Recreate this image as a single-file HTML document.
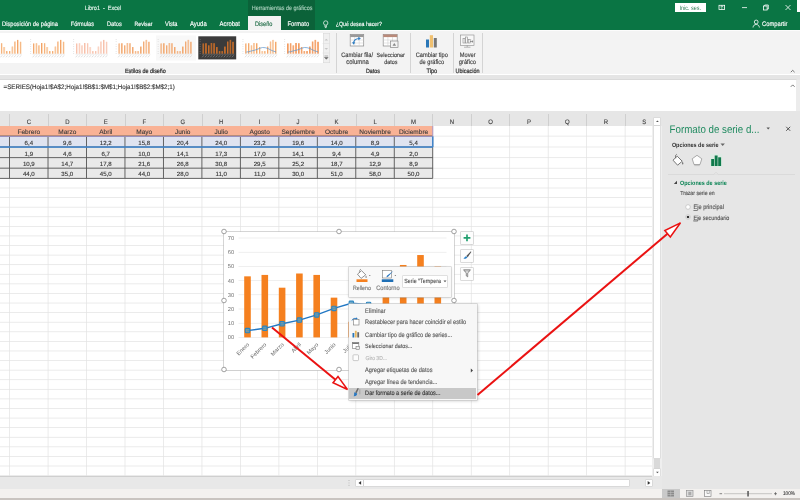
<!DOCTYPE html><html><head><meta charset="utf-8"><title>Excel</title><style>html,body{margin:0;padding:0;}body{width:800px;height:500px;overflow:hidden;position:relative;background:#fff;font-family:"Liberation Sans",sans-serif;}#r{position:absolute;left:0;top:0;width:800px;height:500px;overflow:hidden;}#r{will-change:transform;}#r div,#r span,#r svg{position:absolute;}#r svg.t{left:0;top:0;}#r text{white-space:pre;}#r{text-rendering:geometricPrecision;}#r svg{overflow:visible;}</style></head><body><div id="r">
<div style="left:0.00px;top:0.00px;width:800.00px;height:30.40px;background:#0a7544;"></div>
<div style="left:247.50px;top:0.00px;width:67.50px;height:30.40px;background:#0b6239;"></div>
<div style="left:797.00px;top:0.00px;width:3.00px;height:12.00px;background:#fff;"></div>
<svg class="t" width="1" height="1"><text transform="translate(84.75 10.00) scale(1 1.14)" font-size="5.47" fill="#e8f6ee" stroke="#e8f6ee" stroke-width="0.12">Libro1  -  Excel</text></svg>
<svg class="t" width="1" height="1"><text transform="translate(251.75 10.00) scale(1 1.14)" font-size="5.44" fill="#a8cfbb" stroke="#a8cfbb" stroke-width="0.12">Herramientas de gráficos</text></svg>
<svg class="t" width="1" height="1"><text transform="translate(2.00 26.00) scale(1 1.14)" font-size="5.72" fill="#fff" stroke="#fff" stroke-width="0.12">Disposición de página</text></svg>
<svg class="t" width="1" height="1"><text transform="translate(70.75 26.00) scale(1 1.14)" font-size="5.58" fill="#fff" stroke="#fff" stroke-width="0.12">Fórmulas</text></svg>
<svg class="t" width="1" height="1"><text transform="translate(107.00 26.00) scale(1 1.14)" font-size="5.65" fill="#fff" stroke="#fff" stroke-width="0.12">Datos</text></svg>
<svg class="t" width="1" height="1"><text transform="translate(134.50 26.00) scale(1 1.14)" font-size="5.31" fill="#fff" stroke="#fff" stroke-width="0.12">Revisar</text></svg>
<svg class="t" width="1" height="1"><text transform="translate(165.00 26.00) scale(1 1.14)" font-size="5.67" fill="#fff" stroke="#fff" stroke-width="0.12">Vista</text></svg>
<svg class="t" width="1" height="1"><text transform="translate(190.00 26.00) scale(1 1.14)" font-size="5.95" fill="#fff" stroke="#fff" stroke-width="0.12">Ayuda</text></svg>
<svg class="t" width="1" height="1"><text transform="translate(219.50 26.00) scale(1 1.14)" font-size="5.95" fill="#fff" stroke="#fff" stroke-width="0.12">Acrobat</text></svg>
<div style="left:248.00px;top:16.25px;width:32.50px;height:14.60px;background:#f3f3f3;"></div>
<svg class="t" width="1" height="1"><text transform="translate(255.00 26.00) scale(1 1.14)" font-size="5.62" fill="#1e6b45" stroke="#1e6b45" stroke-width="0.12">Diseño</text></svg>
<svg class="t" width="1" height="1"><text transform="translate(287.50 26.00) scale(1 1.14)" font-size="5.84" fill="#fff" stroke="#fff" stroke-width="0.12">Formato</text></svg>
<svg class="t" width="1" height="1"><text transform="translate(335.75 26.00) scale(1 1.14)" font-size="5.23" fill="#fff" stroke="#fff" stroke-width="0.12">¿Qué desea hacer?</text></svg>
<svg style="left:322px;top:19.500px" width="8" height="9" viewBox="0 0 8 9"><circle cx="3.700" cy="3" r="2.200" fill="none" stroke="#fff" stroke-width="0.700"/><path d="M2.900 5.300v1.500h1.600v-1.500M2.900 7.600h1.600" stroke="#fff" stroke-width="0.700" fill="none"/></svg>
<div style="left:674.50px;top:3.00px;width:31.75px;height:8.75px;background:#fff;"></div>
<svg class="t" width="1" height="1"><text transform="translate(679.50 9.60) scale(1 1.14)" font-size="5.45" fill="#2f7d55">Inic. ses.</text></svg>
<svg style="left:715px;top:2px" width="85" height="12" viewBox="0 0 85 12" fill="none" stroke="#fff" stroke-width="0.8"><rect x="4" y="3.3" width="5.6" height="4.2"/><path d="M6.8 3.3v4.2M5.3 5l1.5-1 1.5 1" stroke-width="0.6"/><path d="M27 5.6h5"/><rect x="48.5" y="4" width="3.6" height="4"/><path d="M49.7 4v-1h3.6v4h-1.2"/><path d="M70.5 3l5 5M75.500 3l-5 5"/></svg>
<svg style="left:751px;top:18.500px" width="10" height="10" viewBox="0 0 10 10" fill="none" stroke="#fff" stroke-width="0.8"><circle cx="5.200" cy="3" r="1.900"/><path d="M2 8.500c0.300-2.200 1.500-3 3.200-3s2.900 0.800 3.200 3"/></svg>
<svg class="t" width="1" height="1"><text transform="translate(762.00 26.00) scale(1 1.14)" font-size="5.81" fill="#fff" stroke="#fff" stroke-width="0.12">Compartir</text></svg>
<div style="left:0.00px;top:30.40px;width:800.00px;height:1.00px;background:#fcfcfc;"></div>
<div style="left:0.00px;top:31.40px;width:800.00px;height:43.00px;background:#f3f3f3;"></div>
<div style="left:0.00px;top:74.70px;width:800.00px;height:5.80px;background:#e5e5e5;"></div>
<div style="left:0.00px;top:33.00px;width:322.50px;height:29.50px;background:#fff;"></div>
<div style="left:322.50px;top:33.00px;width:7.50px;height:29.50px;background:#f0f0f0;box-shadow:inset 0 0 0 0.5px #d5d5d5;"></div>
<svg style="left:0;top:0" width="331" height="70" viewBox="0 0 331 70"><rect x="-9.88" y="43.47" width="0.73" height="10.23" fill="#ef8030"/><rect x="-9.15" y="43.47" width="0.73" height="10.23" fill="#f9cfa0"/><rect x="-7.17" y="43.23" width="0.73" height="10.47" fill="#ef8030"/><rect x="-6.44" y="43.23" width="0.73" height="10.47" fill="#f9cfa0"/><rect x="-4.46" y="45.37" width="0.73" height="8.33" fill="#ef8030"/><rect x="-3.73" y="45.37" width="0.73" height="8.33" fill="#f9cfa0"/><rect x="-1.75" y="42.99" width="0.73" height="10.71" fill="#ef8030"/><rect x="-1.02" y="42.99" width="0.73" height="10.71" fill="#f9cfa0"/><rect x="0.96" y="43.23" width="0.73" height="10.47" fill="#ef8030"/><rect x="1.69" y="43.23" width="0.73" height="10.47" fill="#f9cfa0"/><rect x="3.66" y="47.04" width="0.73" height="6.66" fill="#ef8030"/><rect x="4.40" y="47.04" width="0.73" height="6.66" fill="#f9cfa0"/><rect x="6.37" y="51.08" width="0.73" height="2.62" fill="#ef8030"/><rect x="7.10" y="51.08" width="0.73" height="2.62" fill="#f9cfa0"/><rect x="9.08" y="51.08" width="0.73" height="2.62" fill="#ef8030"/><rect x="9.81" y="51.08" width="0.73" height="2.62" fill="#f9cfa0"/><rect x="11.79" y="46.56" width="0.73" height="7.14" fill="#ef8030"/><rect x="12.52" y="46.56" width="0.73" height="7.14" fill="#f9cfa0"/><rect x="14.50" y="41.56" width="0.73" height="12.14" fill="#ef8030"/><rect x="15.23" y="41.56" width="0.73" height="12.14" fill="#f9cfa0"/><rect x="17.21" y="39.90" width="0.73" height="13.80" fill="#ef8030"/><rect x="17.94" y="39.90" width="0.73" height="13.80" fill="#f9cfa0"/><rect x="19.91" y="41.80" width="0.73" height="11.90" fill="#ef8030"/><rect x="20.65" y="41.80" width="0.73" height="11.90" fill="#f9cfa0"/><rect x="-10.5" y="53.900000000000006" width="32.5" height="0.400" fill="#d8d8d8"/><path d="M-10.35 57.300000000000004 l1.700 -2" stroke="#bdbdbd" stroke-width="0.500"/><path d="M-7.64 57.300000000000004 l1.700 -2" stroke="#bdbdbd" stroke-width="0.500"/><path d="M-4.93 57.300000000000004 l1.700 -2" stroke="#bdbdbd" stroke-width="0.500"/><path d="M-2.22 57.300000000000004 l1.700 -2" stroke="#bdbdbd" stroke-width="0.500"/><path d="M0.49 57.300000000000004 l1.700 -2" stroke="#bdbdbd" stroke-width="0.500"/><path d="M3.20 57.300000000000004 l1.700 -2" stroke="#bdbdbd" stroke-width="0.500"/><path d="M5.90 57.300000000000004 l1.700 -2" stroke="#bdbdbd" stroke-width="0.500"/><path d="M8.61 57.300000000000004 l1.700 -2" stroke="#bdbdbd" stroke-width="0.500"/><path d="M11.32 57.300000000000004 l1.700 -2" stroke="#bdbdbd" stroke-width="0.500"/><path d="M14.03 57.300000000000004 l1.700 -2" stroke="#bdbdbd" stroke-width="0.500"/><path d="M16.74 57.300000000000004 l1.700 -2" stroke="#bdbdbd" stroke-width="0.500"/><path d="M19.45 57.300000000000004 l1.700 -2" stroke="#bdbdbd" stroke-width="0.500"/><rect x="-12.80" y="53.45" width="0.900" height="0.500" fill="#c4c4c4"/><rect x="-12.80" y="51.07" width="0.900" height="0.500" fill="#c4c4c4"/><rect x="-12.80" y="48.69" width="0.900" height="0.500" fill="#c4c4c4"/><rect x="-12.80" y="46.31" width="0.900" height="0.500" fill="#c4c4c4"/><rect x="-12.80" y="43.93" width="0.900" height="0.500" fill="#c4c4c4"/><rect x="-12.80" y="41.55" width="0.900" height="0.500" fill="#c4c4c4"/><rect x="-12.80" y="39.17" width="0.900" height="0.500" fill="#c4c4c4"/><rect x="33.12" y="43.47" width="0.73" height="10.23" fill="#ef8030"/><rect x="33.85" y="43.47" width="0.73" height="10.23" fill="#f9cfa0"/><rect x="35.83" y="43.23" width="0.73" height="10.47" fill="#ef8030"/><rect x="36.56" y="43.23" width="0.73" height="10.47" fill="#f9cfa0"/><rect x="38.54" y="45.37" width="0.73" height="8.33" fill="#ef8030"/><rect x="39.27" y="45.37" width="0.73" height="8.33" fill="#f9cfa0"/><rect x="41.25" y="42.99" width="0.73" height="10.71" fill="#ef8030"/><rect x="41.98" y="42.99" width="0.73" height="10.71" fill="#f9cfa0"/><rect x="43.96" y="43.23" width="0.73" height="10.47" fill="#ef8030"/><rect x="44.69" y="43.23" width="0.73" height="10.47" fill="#f9cfa0"/><rect x="46.66" y="47.04" width="0.73" height="6.66" fill="#ef8030"/><rect x="47.40" y="47.04" width="0.73" height="6.66" fill="#f9cfa0"/><rect x="49.37" y="51.08" width="0.73" height="2.62" fill="#ef8030"/><rect x="50.10" y="51.08" width="0.73" height="2.62" fill="#f9cfa0"/><rect x="52.08" y="51.08" width="0.73" height="2.62" fill="#ef8030"/><rect x="52.81" y="51.08" width="0.73" height="2.62" fill="#f9cfa0"/><rect x="54.79" y="46.56" width="0.73" height="7.14" fill="#ef8030"/><rect x="55.52" y="46.56" width="0.73" height="7.14" fill="#f9cfa0"/><rect x="57.50" y="41.56" width="0.73" height="12.14" fill="#ef8030"/><rect x="58.23" y="41.56" width="0.73" height="12.14" fill="#f9cfa0"/><rect x="60.21" y="39.90" width="0.73" height="13.80" fill="#ef8030"/><rect x="60.94" y="39.90" width="0.73" height="13.80" fill="#f9cfa0"/><rect x="62.91" y="41.80" width="0.73" height="11.90" fill="#ef8030"/><rect x="63.65" y="41.80" width="0.73" height="11.90" fill="#f9cfa0"/><rect x="32.5" y="53.900000000000006" width="32.5" height="0.400" fill="#d8d8d8"/><path d="M32.65 57.300000000000004 l1.700 -2" stroke="#bdbdbd" stroke-width="0.500"/><path d="M35.36 57.300000000000004 l1.700 -2" stroke="#bdbdbd" stroke-width="0.500"/><path d="M38.07 57.300000000000004 l1.700 -2" stroke="#bdbdbd" stroke-width="0.500"/><path d="M40.78 57.300000000000004 l1.700 -2" stroke="#bdbdbd" stroke-width="0.500"/><path d="M43.49 57.300000000000004 l1.700 -2" stroke="#bdbdbd" stroke-width="0.500"/><path d="M46.20 57.300000000000004 l1.700 -2" stroke="#bdbdbd" stroke-width="0.500"/><path d="M48.90 57.300000000000004 l1.700 -2" stroke="#bdbdbd" stroke-width="0.500"/><path d="M51.61 57.300000000000004 l1.700 -2" stroke="#bdbdbd" stroke-width="0.500"/><path d="M54.32 57.300000000000004 l1.700 -2" stroke="#bdbdbd" stroke-width="0.500"/><path d="M57.03 57.300000000000004 l1.700 -2" stroke="#bdbdbd" stroke-width="0.500"/><path d="M59.74 57.300000000000004 l1.700 -2" stroke="#bdbdbd" stroke-width="0.500"/><path d="M62.45 57.300000000000004 l1.700 -2" stroke="#bdbdbd" stroke-width="0.500"/><rect x="30.20" y="53.45" width="0.900" height="0.500" fill="#c4c4c4"/><rect x="30.20" y="51.07" width="0.900" height="0.500" fill="#c4c4c4"/><rect x="30.20" y="48.69" width="0.900" height="0.500" fill="#c4c4c4"/><rect x="30.20" y="46.31" width="0.900" height="0.500" fill="#c4c4c4"/><rect x="30.20" y="43.93" width="0.900" height="0.500" fill="#c4c4c4"/><rect x="30.20" y="41.55" width="0.900" height="0.500" fill="#c4c4c4"/><rect x="30.20" y="39.17" width="0.900" height="0.500" fill="#c4c4c4"/><rect x="76.12" y="43.47" width="0.73" height="10.23" fill="#f5a98c"/><rect x="76.85" y="43.47" width="0.73" height="10.23" fill="#fad5c4"/><rect x="78.83" y="43.23" width="0.73" height="10.47" fill="#f5a98c"/><rect x="79.56" y="43.23" width="0.73" height="10.47" fill="#fad5c4"/><rect x="81.54" y="45.37" width="0.73" height="8.33" fill="#f5a98c"/><rect x="82.27" y="45.37" width="0.73" height="8.33" fill="#fad5c4"/><rect x="84.25" y="42.99" width="0.73" height="10.71" fill="#f5a98c"/><rect x="84.98" y="42.99" width="0.73" height="10.71" fill="#fad5c4"/><rect x="86.96" y="43.23" width="0.73" height="10.47" fill="#f5a98c"/><rect x="87.69" y="43.23" width="0.73" height="10.47" fill="#fad5c4"/><rect x="89.66" y="47.04" width="0.73" height="6.66" fill="#f5a98c"/><rect x="90.40" y="47.04" width="0.73" height="6.66" fill="#fad5c4"/><rect x="92.37" y="51.08" width="0.73" height="2.62" fill="#f5a98c"/><rect x="93.10" y="51.08" width="0.73" height="2.62" fill="#fad5c4"/><rect x="95.08" y="51.08" width="0.73" height="2.62" fill="#f5a98c"/><rect x="95.81" y="51.08" width="0.73" height="2.62" fill="#fad5c4"/><rect x="97.79" y="46.56" width="0.73" height="7.14" fill="#f5a98c"/><rect x="98.52" y="46.56" width="0.73" height="7.14" fill="#fad5c4"/><rect x="100.50" y="41.56" width="0.73" height="12.14" fill="#f5a98c"/><rect x="101.23" y="41.56" width="0.73" height="12.14" fill="#fad5c4"/><rect x="103.21" y="39.90" width="0.73" height="13.80" fill="#f5a98c"/><rect x="103.94" y="39.90" width="0.73" height="13.80" fill="#fad5c4"/><rect x="105.91" y="41.80" width="0.73" height="11.90" fill="#f5a98c"/><rect x="106.65" y="41.80" width="0.73" height="11.90" fill="#fad5c4"/><rect x="75.5" y="53.900000000000006" width="32.5" height="0.400" fill="#d8d8d8"/><path d="M75.65 57.300000000000004 l1.700 -2" stroke="#bdbdbd" stroke-width="0.500"/><path d="M78.36 57.300000000000004 l1.700 -2" stroke="#bdbdbd" stroke-width="0.500"/><path d="M81.07 57.300000000000004 l1.700 -2" stroke="#bdbdbd" stroke-width="0.500"/><path d="M83.78 57.300000000000004 l1.700 -2" stroke="#bdbdbd" stroke-width="0.500"/><path d="M86.49 57.300000000000004 l1.700 -2" stroke="#bdbdbd" stroke-width="0.500"/><path d="M89.20 57.300000000000004 l1.700 -2" stroke="#bdbdbd" stroke-width="0.500"/><path d="M91.90 57.300000000000004 l1.700 -2" stroke="#bdbdbd" stroke-width="0.500"/><path d="M94.61 57.300000000000004 l1.700 -2" stroke="#bdbdbd" stroke-width="0.500"/><path d="M97.32 57.300000000000004 l1.700 -2" stroke="#bdbdbd" stroke-width="0.500"/><path d="M100.03 57.300000000000004 l1.700 -2" stroke="#bdbdbd" stroke-width="0.500"/><path d="M102.74 57.300000000000004 l1.700 -2" stroke="#bdbdbd" stroke-width="0.500"/><path d="M105.45 57.300000000000004 l1.700 -2" stroke="#bdbdbd" stroke-width="0.500"/><rect x="73.20" y="53.45" width="0.900" height="0.500" fill="#c4c4c4"/><rect x="73.20" y="51.07" width="0.900" height="0.500" fill="#c4c4c4"/><rect x="73.20" y="48.69" width="0.900" height="0.500" fill="#c4c4c4"/><rect x="73.20" y="46.31" width="0.900" height="0.500" fill="#c4c4c4"/><rect x="73.20" y="43.93" width="0.900" height="0.500" fill="#c4c4c4"/><rect x="73.20" y="41.55" width="0.900" height="0.500" fill="#c4c4c4"/><rect x="73.20" y="39.17" width="0.900" height="0.500" fill="#c4c4c4"/><rect x="118.62" y="43.47" width="0.73" height="10.23" fill="#ee8a3e"/><rect x="119.35" y="43.47" width="0.73" height="10.23" fill="#f5b98a"/><rect x="121.33" y="43.23" width="0.73" height="10.47" fill="#ee8a3e"/><rect x="122.06" y="43.23" width="0.73" height="10.47" fill="#f5b98a"/><rect x="124.04" y="45.37" width="0.73" height="8.33" fill="#ee8a3e"/><rect x="124.77" y="45.37" width="0.73" height="8.33" fill="#f5b98a"/><rect x="126.75" y="42.99" width="0.73" height="10.71" fill="#ee8a3e"/><rect x="127.48" y="42.99" width="0.73" height="10.71" fill="#f5b98a"/><rect x="129.46" y="43.23" width="0.73" height="10.47" fill="#ee8a3e"/><rect x="130.19" y="43.23" width="0.73" height="10.47" fill="#f5b98a"/><rect x="132.16" y="47.04" width="0.73" height="6.66" fill="#ee8a3e"/><rect x="132.90" y="47.04" width="0.73" height="6.66" fill="#f5b98a"/><rect x="134.87" y="51.08" width="0.73" height="2.62" fill="#ee8a3e"/><rect x="135.60" y="51.08" width="0.73" height="2.62" fill="#f5b98a"/><rect x="137.58" y="51.08" width="0.73" height="2.62" fill="#ee8a3e"/><rect x="138.31" y="51.08" width="0.73" height="2.62" fill="#f5b98a"/><rect x="140.29" y="46.56" width="0.73" height="7.14" fill="#ee8a3e"/><rect x="141.02" y="46.56" width="0.73" height="7.14" fill="#f5b98a"/><rect x="143.00" y="41.56" width="0.73" height="12.14" fill="#ee8a3e"/><rect x="143.73" y="41.56" width="0.73" height="12.14" fill="#f5b98a"/><rect x="145.71" y="39.90" width="0.73" height="13.80" fill="#ee8a3e"/><rect x="146.44" y="39.90" width="0.73" height="13.80" fill="#f5b98a"/><rect x="148.41" y="41.80" width="0.73" height="11.90" fill="#ee8a3e"/><rect x="149.15" y="41.80" width="0.73" height="11.90" fill="#f5b98a"/><rect x="118" y="53.900000000000006" width="32.5" height="0.400" fill="#d8d8d8"/><path d="M118.15 57.300000000000004 l1.700 -2" stroke="#bdbdbd" stroke-width="0.500"/><path d="M120.86 57.300000000000004 l1.700 -2" stroke="#bdbdbd" stroke-width="0.500"/><path d="M123.57 57.300000000000004 l1.700 -2" stroke="#bdbdbd" stroke-width="0.500"/><path d="M126.28 57.300000000000004 l1.700 -2" stroke="#bdbdbd" stroke-width="0.500"/><path d="M128.99 57.300000000000004 l1.700 -2" stroke="#bdbdbd" stroke-width="0.500"/><path d="M131.70 57.300000000000004 l1.700 -2" stroke="#bdbdbd" stroke-width="0.500"/><path d="M134.40 57.300000000000004 l1.700 -2" stroke="#bdbdbd" stroke-width="0.500"/><path d="M137.11 57.300000000000004 l1.700 -2" stroke="#bdbdbd" stroke-width="0.500"/><path d="M139.82 57.300000000000004 l1.700 -2" stroke="#bdbdbd" stroke-width="0.500"/><path d="M142.53 57.300000000000004 l1.700 -2" stroke="#bdbdbd" stroke-width="0.500"/><path d="M145.24 57.300000000000004 l1.700 -2" stroke="#bdbdbd" stroke-width="0.500"/><path d="M147.95 57.300000000000004 l1.700 -2" stroke="#bdbdbd" stroke-width="0.500"/><rect x="115.70" y="53.45" width="0.900" height="0.500" fill="#c4c4c4"/><rect x="115.70" y="51.07" width="0.900" height="0.500" fill="#c4c4c4"/><rect x="115.70" y="48.69" width="0.900" height="0.500" fill="#c4c4c4"/><rect x="115.70" y="46.31" width="0.900" height="0.500" fill="#c4c4c4"/><rect x="115.70" y="43.93" width="0.900" height="0.500" fill="#c4c4c4"/><rect x="115.70" y="41.55" width="0.900" height="0.500" fill="#c4c4c4"/><rect x="115.70" y="39.17" width="0.900" height="0.500" fill="#c4c4c4"/><rect x="156" y="35.500" width="40" height="25" fill="#f8f8f8"/><rect x="160.62" y="43.47" width="0.73" height="10.23" fill="#ee8a3e"/><rect x="161.35" y="43.47" width="0.73" height="10.23" fill="#f5b98a"/><rect x="163.33" y="43.23" width="0.73" height="10.47" fill="#ee8a3e"/><rect x="164.06" y="43.23" width="0.73" height="10.47" fill="#f5b98a"/><rect x="166.04" y="45.37" width="0.73" height="8.33" fill="#ee8a3e"/><rect x="166.77" y="45.37" width="0.73" height="8.33" fill="#f5b98a"/><rect x="168.75" y="42.99" width="0.73" height="10.71" fill="#ee8a3e"/><rect x="169.48" y="42.99" width="0.73" height="10.71" fill="#f5b98a"/><rect x="171.46" y="43.23" width="0.73" height="10.47" fill="#ee8a3e"/><rect x="172.19" y="43.23" width="0.73" height="10.47" fill="#f5b98a"/><rect x="174.16" y="47.04" width="0.73" height="6.66" fill="#ee8a3e"/><rect x="174.90" y="47.04" width="0.73" height="6.66" fill="#f5b98a"/><rect x="176.87" y="51.08" width="0.73" height="2.62" fill="#ee8a3e"/><rect x="177.60" y="51.08" width="0.73" height="2.62" fill="#f5b98a"/><rect x="179.58" y="51.08" width="0.73" height="2.62" fill="#ee8a3e"/><rect x="180.31" y="51.08" width="0.73" height="2.62" fill="#f5b98a"/><rect x="182.29" y="46.56" width="0.73" height="7.14" fill="#ee8a3e"/><rect x="183.02" y="46.56" width="0.73" height="7.14" fill="#f5b98a"/><rect x="185.00" y="41.56" width="0.73" height="12.14" fill="#ee8a3e"/><rect x="185.73" y="41.56" width="0.73" height="12.14" fill="#f5b98a"/><rect x="187.71" y="39.90" width="0.73" height="13.80" fill="#ee8a3e"/><rect x="188.44" y="39.90" width="0.73" height="13.80" fill="#f5b98a"/><rect x="190.41" y="41.80" width="0.73" height="11.90" fill="#ee8a3e"/><rect x="191.15" y="41.80" width="0.73" height="11.90" fill="#f5b98a"/><rect x="160" y="53.900000000000006" width="32.5" height="0.400" fill="#d8d8d8"/><path d="M160.15 57.300000000000004 l1.700 -2" stroke="#bdbdbd" stroke-width="0.500"/><path d="M162.86 57.300000000000004 l1.700 -2" stroke="#bdbdbd" stroke-width="0.500"/><path d="M165.57 57.300000000000004 l1.700 -2" stroke="#bdbdbd" stroke-width="0.500"/><path d="M168.28 57.300000000000004 l1.700 -2" stroke="#bdbdbd" stroke-width="0.500"/><path d="M170.99 57.300000000000004 l1.700 -2" stroke="#bdbdbd" stroke-width="0.500"/><path d="M173.70 57.300000000000004 l1.700 -2" stroke="#bdbdbd" stroke-width="0.500"/><path d="M176.40 57.300000000000004 l1.700 -2" stroke="#bdbdbd" stroke-width="0.500"/><path d="M179.11 57.300000000000004 l1.700 -2" stroke="#bdbdbd" stroke-width="0.500"/><path d="M181.82 57.300000000000004 l1.700 -2" stroke="#bdbdbd" stroke-width="0.500"/><path d="M184.53 57.300000000000004 l1.700 -2" stroke="#bdbdbd" stroke-width="0.500"/><path d="M187.24 57.300000000000004 l1.700 -2" stroke="#bdbdbd" stroke-width="0.500"/><path d="M189.95 57.300000000000004 l1.700 -2" stroke="#bdbdbd" stroke-width="0.500"/><rect x="157.70" y="53.45" width="0.900" height="0.500" fill="#c4c4c4"/><rect x="157.70" y="51.07" width="0.900" height="0.500" fill="#c4c4c4"/><rect x="157.70" y="48.69" width="0.900" height="0.500" fill="#c4c4c4"/><rect x="157.70" y="46.31" width="0.900" height="0.500" fill="#c4c4c4"/><rect x="157.70" y="43.93" width="0.900" height="0.500" fill="#c4c4c4"/><rect x="157.70" y="41.55" width="0.900" height="0.500" fill="#c4c4c4"/><rect x="157.70" y="39.17" width="0.900" height="0.500" fill="#c4c4c4"/><rect x="198.3" y="36.300" width="37.9" height="23.100" fill="#3b3b3b"/><rect x="202.62" y="43.47" width="0.73" height="10.23" fill="#f08030"/><rect x="203.35" y="43.47" width="0.73" height="10.23" fill="#d8701f"/><rect x="205.33" y="43.23" width="0.73" height="10.47" fill="#f08030"/><rect x="206.06" y="43.23" width="0.73" height="10.47" fill="#d8701f"/><rect x="208.04" y="45.37" width="0.73" height="8.33" fill="#f08030"/><rect x="208.77" y="45.37" width="0.73" height="8.33" fill="#d8701f"/><rect x="210.75" y="42.99" width="0.73" height="10.71" fill="#f08030"/><rect x="211.48" y="42.99" width="0.73" height="10.71" fill="#d8701f"/><rect x="213.46" y="43.23" width="0.73" height="10.47" fill="#f08030"/><rect x="214.19" y="43.23" width="0.73" height="10.47" fill="#d8701f"/><rect x="216.16" y="47.04" width="0.73" height="6.66" fill="#f08030"/><rect x="216.90" y="47.04" width="0.73" height="6.66" fill="#d8701f"/><rect x="218.87" y="51.08" width="0.73" height="2.62" fill="#f08030"/><rect x="219.60" y="51.08" width="0.73" height="2.62" fill="#d8701f"/><rect x="221.58" y="51.08" width="0.73" height="2.62" fill="#f08030"/><rect x="222.31" y="51.08" width="0.73" height="2.62" fill="#d8701f"/><rect x="224.29" y="46.56" width="0.73" height="7.14" fill="#f08030"/><rect x="225.02" y="46.56" width="0.73" height="7.14" fill="#d8701f"/><rect x="227.00" y="41.56" width="0.73" height="12.14" fill="#f08030"/><rect x="227.73" y="41.56" width="0.73" height="12.14" fill="#d8701f"/><rect x="229.71" y="39.90" width="0.73" height="13.80" fill="#f08030"/><rect x="230.44" y="39.90" width="0.73" height="13.80" fill="#d8701f"/><rect x="232.41" y="41.80" width="0.73" height="11.90" fill="#f08030"/><rect x="233.15" y="41.80" width="0.73" height="11.90" fill="#d8701f"/><rect x="202" y="53.900000000000006" width="32.5" height="0.400" fill="#888"/><path d="M202.15 57.300000000000004 l1.700 -2" stroke="#aaa" stroke-width="0.500"/><path d="M204.86 57.300000000000004 l1.700 -2" stroke="#aaa" stroke-width="0.500"/><path d="M207.57 57.300000000000004 l1.700 -2" stroke="#aaa" stroke-width="0.500"/><path d="M210.28 57.300000000000004 l1.700 -2" stroke="#aaa" stroke-width="0.500"/><path d="M212.99 57.300000000000004 l1.700 -2" stroke="#aaa" stroke-width="0.500"/><path d="M215.70 57.300000000000004 l1.700 -2" stroke="#aaa" stroke-width="0.500"/><path d="M218.40 57.300000000000004 l1.700 -2" stroke="#aaa" stroke-width="0.500"/><path d="M221.11 57.300000000000004 l1.700 -2" stroke="#aaa" stroke-width="0.500"/><path d="M223.82 57.300000000000004 l1.700 -2" stroke="#aaa" stroke-width="0.500"/><path d="M226.53 57.300000000000004 l1.700 -2" stroke="#aaa" stroke-width="0.500"/><path d="M229.24 57.300000000000004 l1.700 -2" stroke="#aaa" stroke-width="0.500"/><path d="M231.95 57.300000000000004 l1.700 -2" stroke="#aaa" stroke-width="0.500"/><rect x="199.70" y="53.45" width="0.900" height="0.500" fill="#999"/><rect x="199.70" y="51.07" width="0.900" height="0.500" fill="#999"/><rect x="199.70" y="48.69" width="0.900" height="0.500" fill="#999"/><rect x="199.70" y="46.31" width="0.900" height="0.500" fill="#999"/><rect x="199.70" y="43.93" width="0.900" height="0.500" fill="#999"/><rect x="199.70" y="41.55" width="0.900" height="0.500" fill="#999"/><rect x="199.70" y="39.17" width="0.900" height="0.500" fill="#999"/><rect x="245.42" y="43.47" width="0.73" height="10.23" fill="#ef8030"/><rect x="246.16" y="43.47" width="0.73" height="10.23" fill="#f9cfa0"/><rect x="248.14" y="43.23" width="0.73" height="10.47" fill="#ef8030"/><rect x="248.88" y="43.23" width="0.73" height="10.47" fill="#f9cfa0"/><rect x="250.86" y="45.37" width="0.73" height="8.33" fill="#ef8030"/><rect x="251.59" y="45.37" width="0.73" height="8.33" fill="#f9cfa0"/><rect x="253.57" y="42.99" width="0.73" height="10.71" fill="#ef8030"/><rect x="254.31" y="42.99" width="0.73" height="10.71" fill="#f9cfa0"/><rect x="256.29" y="43.23" width="0.73" height="10.47" fill="#ef8030"/><rect x="257.03" y="43.23" width="0.73" height="10.47" fill="#f9cfa0"/><rect x="259.01" y="47.04" width="0.73" height="6.66" fill="#ef8030"/><rect x="259.74" y="47.04" width="0.73" height="6.66" fill="#f9cfa0"/><rect x="261.72" y="51.08" width="0.73" height="2.62" fill="#ef8030"/><rect x="262.46" y="51.08" width="0.73" height="2.62" fill="#f9cfa0"/><rect x="264.44" y="51.08" width="0.73" height="2.62" fill="#ef8030"/><rect x="265.18" y="51.08" width="0.73" height="2.62" fill="#f9cfa0"/><rect x="267.16" y="46.56" width="0.73" height="7.14" fill="#ef8030"/><rect x="267.89" y="46.56" width="0.73" height="7.14" fill="#f9cfa0"/><rect x="269.87" y="41.56" width="0.73" height="12.14" fill="#ef8030"/><rect x="270.61" y="41.56" width="0.73" height="12.14" fill="#f9cfa0"/><rect x="272.59" y="39.90" width="0.73" height="13.80" fill="#ef8030"/><rect x="273.32" y="39.90" width="0.73" height="13.80" fill="#f9cfa0"/><rect x="275.31" y="41.80" width="0.73" height="11.90" fill="#ef8030"/><rect x="276.04" y="41.80" width="0.73" height="11.90" fill="#f9cfa0"/><polyline points="246.2,52.1 248.9,51.7 251.6,50.9 254.3,50.3 257.0,49.4 259.7,48.3 262.5,47.5 265.2,47.7 267.9,48.5 270.6,49.9 273.3,51.1 276.0,51.9" fill="none" stroke="#5b95cf" stroke-width="0.700"/><rect x="244.8" y="53.900000000000006" width="32.6" height="0.400" fill="#d8d8d8"/><path d="M244.96 57.300000000000004 l1.700 -2" stroke="#bdbdbd" stroke-width="0.500"/><path d="M247.68 57.300000000000004 l1.700 -2" stroke="#bdbdbd" stroke-width="0.500"/><path d="M250.39 57.300000000000004 l1.700 -2" stroke="#bdbdbd" stroke-width="0.500"/><path d="M253.11 57.300000000000004 l1.700 -2" stroke="#bdbdbd" stroke-width="0.500"/><path d="M255.83 57.300000000000004 l1.700 -2" stroke="#bdbdbd" stroke-width="0.500"/><path d="M258.54 57.300000000000004 l1.700 -2" stroke="#bdbdbd" stroke-width="0.500"/><path d="M261.26 57.300000000000004 l1.700 -2" stroke="#bdbdbd" stroke-width="0.500"/><path d="M263.98 57.300000000000004 l1.700 -2" stroke="#bdbdbd" stroke-width="0.500"/><path d="M266.69 57.300000000000004 l1.700 -2" stroke="#bdbdbd" stroke-width="0.500"/><path d="M269.41 57.300000000000004 l1.700 -2" stroke="#bdbdbd" stroke-width="0.500"/><path d="M272.12 57.300000000000004 l1.700 -2" stroke="#bdbdbd" stroke-width="0.500"/><path d="M274.84 57.300000000000004 l1.700 -2" stroke="#bdbdbd" stroke-width="0.500"/><rect x="242.50" y="53.45" width="0.900" height="0.500" fill="#c4c4c4"/><rect x="242.50" y="51.07" width="0.900" height="0.500" fill="#c4c4c4"/><rect x="242.50" y="48.69" width="0.900" height="0.500" fill="#c4c4c4"/><rect x="242.50" y="46.31" width="0.900" height="0.500" fill="#c4c4c4"/><rect x="242.50" y="43.93" width="0.900" height="0.500" fill="#c4c4c4"/><rect x="242.50" y="41.55" width="0.900" height="0.500" fill="#c4c4c4"/><rect x="242.50" y="39.17" width="0.900" height="0.500" fill="#c4c4c4"/><rect x="287.13" y="43.47" width="0.74" height="10.23" fill="#ee7a30"/><rect x="287.88" y="43.47" width="0.74" height="10.23" fill="#f3924a"/><rect x="289.88" y="43.23" width="0.74" height="10.47" fill="#ee7a30"/><rect x="290.62" y="43.23" width="0.74" height="10.47" fill="#f3924a"/><rect x="292.63" y="45.37" width="0.74" height="8.33" fill="#ee7a30"/><rect x="293.38" y="45.37" width="0.74" height="8.33" fill="#f3924a"/><rect x="295.38" y="42.99" width="0.74" height="10.71" fill="#ee7a30"/><rect x="296.12" y="42.99" width="0.74" height="10.71" fill="#f3924a"/><rect x="298.13" y="43.23" width="0.74" height="10.47" fill="#ee7a30"/><rect x="298.88" y="43.23" width="0.74" height="10.47" fill="#f3924a"/><rect x="300.88" y="47.04" width="0.74" height="6.66" fill="#ee7a30"/><rect x="301.62" y="47.04" width="0.74" height="6.66" fill="#f3924a"/><rect x="303.63" y="51.08" width="0.74" height="2.62" fill="#ee7a30"/><rect x="304.38" y="51.08" width="0.74" height="2.62" fill="#f3924a"/><rect x="306.38" y="51.08" width="0.74" height="2.62" fill="#ee7a30"/><rect x="307.12" y="51.08" width="0.74" height="2.62" fill="#f3924a"/><rect x="309.13" y="46.56" width="0.74" height="7.14" fill="#ee7a30"/><rect x="309.88" y="46.56" width="0.74" height="7.14" fill="#f3924a"/><rect x="311.88" y="41.56" width="0.74" height="12.14" fill="#ee7a30"/><rect x="312.62" y="41.56" width="0.74" height="12.14" fill="#f3924a"/><rect x="314.63" y="39.90" width="0.74" height="13.80" fill="#ee7a30"/><rect x="315.38" y="39.90" width="0.74" height="13.80" fill="#f3924a"/><rect x="317.38" y="41.80" width="0.74" height="11.90" fill="#ee7a30"/><rect x="318.12" y="41.80" width="0.74" height="11.90" fill="#f3924a"/><polyline points="287.9,52.1 290.6,51.7 293.4,50.9 296.1,50.3 298.9,49.4 301.6,48.3 304.4,47.5 307.1,47.7 309.9,48.5 312.6,49.9 315.4,51.1 318.1,51.9" fill="none" stroke="#5b95cf" stroke-width="0.700"/><rect x="286.5" y="53.900000000000006" width="33" height="0.400" fill="#d8d8d8"/><path d="M286.68 57.300000000000004 l1.700 -2" stroke="#bdbdbd" stroke-width="0.500"/><path d="M289.43 57.300000000000004 l1.700 -2" stroke="#bdbdbd" stroke-width="0.500"/><path d="M292.18 57.300000000000004 l1.700 -2" stroke="#bdbdbd" stroke-width="0.500"/><path d="M294.93 57.300000000000004 l1.700 -2" stroke="#bdbdbd" stroke-width="0.500"/><path d="M297.68 57.300000000000004 l1.700 -2" stroke="#bdbdbd" stroke-width="0.500"/><path d="M300.43 57.300000000000004 l1.700 -2" stroke="#bdbdbd" stroke-width="0.500"/><path d="M303.18 57.300000000000004 l1.700 -2" stroke="#bdbdbd" stroke-width="0.500"/><path d="M305.93 57.300000000000004 l1.700 -2" stroke="#bdbdbd" stroke-width="0.500"/><path d="M308.68 57.300000000000004 l1.700 -2" stroke="#bdbdbd" stroke-width="0.500"/><path d="M311.43 57.300000000000004 l1.700 -2" stroke="#bdbdbd" stroke-width="0.500"/><path d="M314.18 57.300000000000004 l1.700 -2" stroke="#bdbdbd" stroke-width="0.500"/><path d="M316.93 57.300000000000004 l1.700 -2" stroke="#bdbdbd" stroke-width="0.500"/><rect x="284.20" y="53.45" width="0.900" height="0.500" fill="#c4c4c4"/><rect x="284.20" y="51.07" width="0.900" height="0.500" fill="#c4c4c4"/><rect x="284.20" y="48.69" width="0.900" height="0.500" fill="#c4c4c4"/><rect x="284.20" y="46.31" width="0.900" height="0.500" fill="#c4c4c4"/><rect x="284.20" y="43.93" width="0.900" height="0.500" fill="#c4c4c4"/><rect x="284.20" y="41.55" width="0.900" height="0.500" fill="#c4c4c4"/><rect x="284.20" y="39.17" width="0.900" height="0.500" fill="#c4c4c4"/><path d="M324.500 40.500l1.800 -1.800l1.800 1.800z" fill="#c5c5c5"/><path d="M324.500 48l1.800 1.800l1.800 -1.800z" fill="#c5c5c5"/><path d="M324.500 57.500l1.800 1.800l1.800 -1.800z M324.500 56h3.600" fill="#666" stroke="#666" stroke-width="0.500"/><path d="M322.500 43.500h7.500M322.500 53h7.500" stroke="#ddd" stroke-width="0.500"/></svg>
<svg class="t" width="1" height="1"><text transform="translate(125.00 73.00) scale(1 1.14)" font-size="5.42" fill="#333" stroke="#333" stroke-width="0.2">Estilos de diseño</text></svg>
<div style="left:335.50px;top:33.00px;width:0.60px;height:40.00px;background:#d4d4d4;"></div>
<div style="left:410.25px;top:33.00px;width:0.60px;height:40.00px;background:#d4d4d4;"></div>
<div style="left:452.75px;top:33.00px;width:0.60px;height:40.00px;background:#d4d4d4;"></div>
<div style="left:481.50px;top:33.00px;width:0.60px;height:40.00px;background:#d4d4d4;"></div>
<svg style="left:349px;top:33px" width="17" height="16" viewBox="0 0 17 16"><rect x="1.200" y="1.500" width="13.500" height="11.500" fill="#fff" stroke="#8a8a8a" stroke-width="0.700"/><rect x="1.200" y="1.500" width="13.500" height="2.600" fill="#9a9a9a"/><path d="M1.200 7h13.500M1.200 10h13.500M5.700 4v9M10.200 4v9" stroke="#c9c9c9" stroke-width="0.500"/><path d="M4.500 11c0-3.500 2-5.500 6-5.500" fill="none" stroke="#2f7fc4" stroke-width="1.200"/><path d="M9.300 3.700l2.600 1.800l-2.600 1.800z" fill="#2f7fc4"/><path d="M3 9.300l1.600 2.500l1.600-2.500z" fill="#2f7fc4"/></svg>
<svg class="t" width="1" height="1"><text transform="translate(341.20 57.00) scale(1 1.14)" font-size="5.67" fill="#3b3b3b" stroke="#3b3b3b" stroke-width="0.12">Cambiar fila/</text></svg>
<svg class="t" width="1" height="1"><text transform="translate(346.30 64.00) scale(1 1.14)" font-size="5.95" fill="#3b3b3b" stroke="#3b3b3b" stroke-width="0.12">columna</text></svg>
<svg style="left:382px;top:33px" width="18" height="16" viewBox="0 0 18 16"><rect x="1.200" y="1.500" width="14" height="11.500" fill="#fff" stroke="#8a8a8a" stroke-width="0.700"/><rect x="1.200" y="1.500" width="14" height="2.600" fill="#b98a7a"/><path d="M1.200 7h14M1.200 10h14M5.900 4v9M10.500 4v9" stroke="#c9c9c9" stroke-width="0.500"/><rect x="8.500" y="8" width="7.500" height="6.500" fill="#f3f3f3" stroke="#777" stroke-width="0.600"/><path d="M10.500 12.800l1.800-2.800l1.800 2.800z" fill="#888"/></svg>
<svg class="t" width="1" height="1"><text transform="translate(376.60 57.00) scale(1 1.14)" font-size="5.40" fill="#3b3b3b" stroke="#3b3b3b" stroke-width="0.12">Seleccionar</text></svg>
<svg class="t" width="1" height="1"><text transform="translate(384.20 64.00) scale(1 1.14)" font-size="5.36" fill="#3b3b3b" stroke="#3b3b3b" stroke-width="0.12">datos</text></svg>
<svg class="t" width="1" height="1"><text transform="translate(366.00 73.00) scale(1 1.14)" font-size="5.36" fill="#333" stroke="#333" stroke-width="0.2">Datos</text></svg>
<svg style="left:425px;top:34px" width="14" height="15" viewBox="0 0 14 15"><rect x="1" y="5.500" width="3" height="8" fill="#2a77b8"/><rect x="4.800" y="1.200" width="3.200" height="12.300" fill="#f0c070"/><rect x="8.800" y="4" width="3" height="9.500" fill="#767676"/></svg>
<svg class="t" width="1" height="1"><text transform="translate(415.70 57.00) scale(1 1.14)" font-size="5.70" fill="#3b3b3b" stroke="#3b3b3b" stroke-width="0.12">Cambiar tipo</text></svg>
<svg class="t" width="1" height="1"><text transform="translate(419.40 64.00) scale(1 1.14)" font-size="5.65" fill="#3b3b3b" stroke="#3b3b3b" stroke-width="0.12">de gráfico</text></svg>
<svg class="t" width="1" height="1"><text transform="translate(426.40 73.00) scale(1 1.14)" font-size="5.66" fill="#333" stroke="#333" stroke-width="0.2">Tipo</text></svg>
<svg style="left:459px;top:34px" width="17" height="15" viewBox="0 0 17 15" fill="none" stroke="#8a8a8a" stroke-width="0.600"><rect x="1.500" y="1" width="13.500" height="10.500" fill="#f8f8f8"/><rect x="4" y="4.500" width="2" height="4.500"/><rect x="6.600" y="3" width="2" height="6"/><rect x="9.200" y="5.500" width="2" height="3.500"/><path d="M8.200 11.500v1.500M5 13.200h6.500" /><path d="M11 7.500h3M12.800 6.300l1.300 1.200l-1.300 1.200" stroke="#666"/></svg>
<svg class="t" width="1" height="1"><text transform="translate(459.80 57.00) scale(1 1.14)" font-size="5.72" fill="#3b3b3b" stroke="#3b3b3b" stroke-width="0.12">Mover</text></svg>
<svg class="t" width="1" height="1"><text transform="translate(458.80 64.00) scale(1 1.14)" font-size="5.73" fill="#3b3b3b" stroke="#3b3b3b" stroke-width="0.12">gráfico</text></svg>
<svg class="t" width="1" height="1"><text transform="translate(455.50 73.00) scale(1 1.14)" font-size="5.47" fill="#333" stroke="#333" stroke-width="0.2">Ubicación</text></svg>
<div style="left:0.00px;top:80.40px;width:796.00px;height:30.20px;background:#fff;box-shadow:0 0 0 0.5px #d0d0d0;"></div>
<div style="left:796.00px;top:80.40px;width:4.00px;height:30.20px;background:#ececec;"></div>
<svg class="t" width="1" height="1"><text transform="translate(3.50 89.40) scale(1 1.05)" font-size="6.23" fill="#333" stroke="#333" stroke-width="0.12">=SERIES(Hoja1!$A$2;Hoja1!$B$1:$M$1;Hoja1!$B$2:$M$2;1)</text></svg>
<svg style="left:789px;top:68px" width="8" height="22" viewBox="0 0 8 22" fill="none" stroke="#555" stroke-width="0.800"><path d="M1.800 4.200l1.900-1.900l1.900 1.900"/><path d="M1.800 18.800l1.900-1.900l1.900 1.900"/></svg>
<div style="left:0.00px;top:110.60px;width:800.00px;height:15.40px;background:#e6e6e6;"></div>
<div style="left:0.00px;top:126.00px;width:652.00px;height:350.00px;background:#fff;"></div>
<div style="left:9.30px;top:114.00px;width:0.70px;height:12.00px;background:#cfcfcf;"></div>
<svg class="t" width="1" height="1"><text transform="translate(26.67 123.50) scale(1 1.08)" font-size="6.00" fill="#444" stroke="#444" stroke-width="0.12">C</text></svg>
<div style="left:47.77px;top:114.00px;width:0.70px;height:12.00px;background:#cfcfcf;"></div>
<svg class="t" width="1" height="1"><text transform="translate(65.14 123.50) scale(1 1.08)" font-size="6.00" fill="#444" stroke="#444" stroke-width="0.12">D</text></svg>
<div style="left:86.24px;top:114.00px;width:0.70px;height:12.00px;background:#cfcfcf;"></div>
<svg class="t" width="1" height="1"><text transform="translate(103.77 123.50) scale(1 1.08)" font-size="6.00" fill="#444" stroke="#444" stroke-width="0.12">E</text></svg>
<div style="left:124.71px;top:114.00px;width:0.70px;height:12.00px;background:#cfcfcf;"></div>
<svg class="t" width="1" height="1"><text transform="translate(142.41 123.50) scale(1 1.08)" font-size="6.00" fill="#444" stroke="#444" stroke-width="0.12">F</text></svg>
<div style="left:163.18px;top:114.00px;width:0.70px;height:12.00px;background:#cfcfcf;"></div>
<svg class="t" width="1" height="1"><text transform="translate(180.38 123.50) scale(1 1.08)" font-size="6.00" fill="#444" stroke="#444" stroke-width="0.12">G</text></svg>
<div style="left:201.65px;top:114.00px;width:0.70px;height:12.00px;background:#cfcfcf;"></div>
<svg class="t" width="1" height="1"><text transform="translate(219.02 123.50) scale(1 1.08)" font-size="6.00" fill="#444" stroke="#444" stroke-width="0.12">H</text></svg>
<div style="left:240.12px;top:114.00px;width:0.70px;height:12.00px;background:#cfcfcf;"></div>
<svg class="t" width="1" height="1"><text transform="translate(258.82 123.50) scale(1 1.08)" font-size="6.00" fill="#444" stroke="#444" stroke-width="0.12">I</text></svg>
<div style="left:278.59px;top:114.00px;width:0.70px;height:12.00px;background:#cfcfcf;"></div>
<svg class="t" width="1" height="1"><text transform="translate(296.62 123.50) scale(1 1.08)" font-size="6.00" fill="#444" stroke="#444" stroke-width="0.12">J</text></svg>
<div style="left:317.06px;top:114.00px;width:0.70px;height:12.00px;background:#cfcfcf;"></div>
<svg class="t" width="1" height="1"><text transform="translate(334.59 123.50) scale(1 1.08)" font-size="6.00" fill="#444" stroke="#444" stroke-width="0.12">K</text></svg>
<div style="left:355.53px;top:114.00px;width:0.70px;height:12.00px;background:#cfcfcf;"></div>
<svg class="t" width="1" height="1"><text transform="translate(373.40 123.50) scale(1 1.08)" font-size="6.00" fill="#444" stroke="#444" stroke-width="0.12">L</text></svg>
<div style="left:394.00px;top:114.00px;width:0.70px;height:12.00px;background:#cfcfcf;"></div>
<svg class="t" width="1" height="1"><text transform="translate(411.04 123.50) scale(1 1.08)" font-size="6.00" fill="#444" stroke="#444" stroke-width="0.12">M</text></svg>
<div style="left:432.47px;top:114.00px;width:0.70px;height:12.00px;background:#cfcfcf;"></div>
<svg class="t" width="1" height="1"><text transform="translate(449.84 123.50) scale(1 1.08)" font-size="6.00" fill="#444" stroke="#444" stroke-width="0.12">N</text></svg>
<div style="left:470.94px;top:114.00px;width:0.70px;height:12.00px;background:#cfcfcf;"></div>
<svg class="t" width="1" height="1"><text transform="translate(488.14 123.50) scale(1 1.08)" font-size="6.00" fill="#444" stroke="#444" stroke-width="0.12">O</text></svg>
<div style="left:509.41px;top:114.00px;width:0.70px;height:12.00px;background:#cfcfcf;"></div>
<svg class="t" width="1" height="1"><text transform="translate(526.94 123.50) scale(1 1.08)" font-size="6.00" fill="#444" stroke="#444" stroke-width="0.12">P</text></svg>
<div style="left:547.88px;top:114.00px;width:0.70px;height:12.00px;background:#cfcfcf;"></div>
<svg class="t" width="1" height="1"><text transform="translate(565.08 123.50) scale(1 1.08)" font-size="6.00" fill="#444" stroke="#444" stroke-width="0.12">Q</text></svg>
<div style="left:586.35px;top:114.00px;width:0.70px;height:12.00px;background:#cfcfcf;"></div>
<svg class="t" width="1" height="1"><text transform="translate(603.72 123.50) scale(1 1.08)" font-size="6.00" fill="#444" stroke="#444" stroke-width="0.12">R</text></svg>
<div style="left:624.82px;top:114.00px;width:0.70px;height:12.00px;background:#cfcfcf;"></div>
<svg class="t" width="1" height="1"><text transform="translate(642.35 123.50) scale(1 1.08)" font-size="6.00" fill="#444" stroke="#444" stroke-width="0.12">S</text></svg>
<svg style="left:0;top:0" width="652" height="477" viewBox="0 0 652 477"><rect x="0" y="135.75" width="652" height="0.700" fill="#e2e2e2"/><rect x="0" y="146.65" width="652" height="0.700" fill="#e2e2e2"/><rect x="0" y="157.35" width="652" height="0.700" fill="#e2e2e2"/><rect x="0" y="167.85" width="652" height="0.700" fill="#e2e2e2"/><rect x="0" y="178.05" width="652" height="0.700" fill="#e2e2e2"/><rect x="0" y="187.64" width="652" height="0.700" fill="#e2e2e2"/><rect x="0" y="197.22" width="652" height="0.700" fill="#e2e2e2"/><rect x="0" y="206.81" width="652" height="0.700" fill="#e2e2e2"/><rect x="0" y="216.40" width="652" height="0.700" fill="#e2e2e2"/><rect x="0" y="225.99" width="652" height="0.700" fill="#e2e2e2"/><rect x="0" y="235.57" width="652" height="0.700" fill="#e2e2e2"/><rect x="0" y="245.16" width="652" height="0.700" fill="#e2e2e2"/><rect x="0" y="254.75" width="652" height="0.700" fill="#e2e2e2"/><rect x="0" y="264.33" width="652" height="0.700" fill="#e2e2e2"/><rect x="0" y="273.92" width="652" height="0.700" fill="#e2e2e2"/><rect x="0" y="283.51" width="652" height="0.700" fill="#e2e2e2"/><rect x="0" y="293.09" width="652" height="0.700" fill="#e2e2e2"/><rect x="0" y="302.68" width="652" height="0.700" fill="#e2e2e2"/><rect x="0" y="312.27" width="652" height="0.700" fill="#e2e2e2"/><rect x="0" y="321.86" width="652" height="0.700" fill="#e2e2e2"/><rect x="0" y="331.44" width="652" height="0.700" fill="#e2e2e2"/><rect x="0" y="341.03" width="652" height="0.700" fill="#e2e2e2"/><rect x="0" y="350.62" width="652" height="0.700" fill="#e2e2e2"/><rect x="0" y="360.20" width="652" height="0.700" fill="#e2e2e2"/><rect x="0" y="369.79" width="652" height="0.700" fill="#e2e2e2"/><rect x="0" y="379.38" width="652" height="0.700" fill="#e2e2e2"/><rect x="0" y="388.96" width="652" height="0.700" fill="#e2e2e2"/><rect x="0" y="398.55" width="652" height="0.700" fill="#e2e2e2"/><rect x="0" y="408.14" width="652" height="0.700" fill="#e2e2e2"/><rect x="0" y="417.72" width="652" height="0.700" fill="#e2e2e2"/><rect x="0" y="427.31" width="652" height="0.700" fill="#e2e2e2"/><rect x="0" y="436.90" width="652" height="0.700" fill="#e2e2e2"/><rect x="0" y="446.49" width="652" height="0.700" fill="#e2e2e2"/><rect x="0" y="456.07" width="652" height="0.700" fill="#e2e2e2"/><rect x="0" y="465.66" width="652" height="0.700" fill="#e2e2e2"/><rect x="0" y="475.25" width="652" height="0.700" fill="#e2e2e2"/><rect x="9.25" y="126" width="0.700" height="350" fill="#e2e2e2"/><rect x="47.72" y="126" width="0.700" height="350" fill="#e2e2e2"/><rect x="86.19" y="126" width="0.700" height="350" fill="#e2e2e2"/><rect x="124.66" y="126" width="0.700" height="350" fill="#e2e2e2"/><rect x="163.13" y="126" width="0.700" height="350" fill="#e2e2e2"/><rect x="201.60" y="126" width="0.700" height="350" fill="#e2e2e2"/><rect x="240.07" y="126" width="0.700" height="350" fill="#e2e2e2"/><rect x="278.54" y="126" width="0.700" height="350" fill="#e2e2e2"/><rect x="317.01" y="126" width="0.700" height="350" fill="#e2e2e2"/><rect x="355.48" y="126" width="0.700" height="350" fill="#e2e2e2"/><rect x="393.95" y="126" width="0.700" height="350" fill="#e2e2e2"/><rect x="432.42" y="126" width="0.700" height="350" fill="#e2e2e2"/><rect x="470.89" y="126" width="0.700" height="350" fill="#e2e2e2"/><rect x="509.36" y="126" width="0.700" height="350" fill="#e2e2e2"/><rect x="547.83" y="126" width="0.700" height="350" fill="#e2e2e2"/><rect x="586.30" y="126" width="0.700" height="350" fill="#e2e2e2"/><rect x="624.77" y="126" width="0.700" height="350" fill="#e2e2e2"/></svg>
<div style="left:0.00px;top:125.80px;width:432.77px;height:10.30px;background:#f9b295;"></div>
<div style="left:0.00px;top:136.10px;width:432.77px;height:10.90px;background:#dfe3f0;"></div>
<div style="left:0.00px;top:147.00px;width:432.77px;height:31.20px;background:#e9e9e9;"></div>
<svg class="t" width="1" height="1"><text transform="translate(17.46 133.75) scale(1 1.0)" font-size="6.50" fill="#3a3a3a" stroke="#3a3a3a" stroke-width="0.12">Febrero</text></svg>
<svg class="t" width="1" height="1"><text transform="translate(24.60 144.75) scale(1 1.0)" font-size="6.10" fill="#333" stroke="#333" stroke-width="0.12">6,4</text></svg>
<svg class="t" width="1" height="1"><text transform="translate(24.60 155.90) scale(1 1.0)" font-size="6.10" fill="#333" stroke="#333" stroke-width="0.12">1,9</text></svg>
<svg class="t" width="1" height="1"><text transform="translate(22.90 166.30) scale(1 1.0)" font-size="6.10" fill="#333" stroke="#333" stroke-width="0.12">10,9</text></svg>
<svg class="t" width="1" height="1"><text transform="translate(22.90 176.30) scale(1 1.0)" font-size="6.10" fill="#333" stroke="#333" stroke-width="0.12">44,0</text></svg>
<svg class="t" width="1" height="1"><text transform="translate(58.28 133.75) scale(1 1.0)" font-size="6.50" fill="#3a3a3a" stroke="#3a3a3a" stroke-width="0.12">Marzo</text></svg>
<svg class="t" width="1" height="1"><text transform="translate(63.07 144.75) scale(1 1.0)" font-size="6.10" fill="#333" stroke="#333" stroke-width="0.12">9,6</text></svg>
<svg class="t" width="1" height="1"><text transform="translate(63.07 155.90) scale(1 1.0)" font-size="6.10" fill="#333" stroke="#333" stroke-width="0.12">4,6</text></svg>
<svg class="t" width="1" height="1"><text transform="translate(61.37 166.30) scale(1 1.0)" font-size="6.10" fill="#333" stroke="#333" stroke-width="0.12">14,7</text></svg>
<svg class="t" width="1" height="1"><text transform="translate(61.37 176.30) scale(1 1.0)" font-size="6.10" fill="#333" stroke="#333" stroke-width="0.12">35,0</text></svg>
<svg class="t" width="1" height="1"><text transform="translate(99.27 133.75) scale(1 1.0)" font-size="6.50" fill="#3a3a3a" stroke="#3a3a3a" stroke-width="0.12">Abril</text></svg>
<svg class="t" width="1" height="1"><text transform="translate(99.84 144.75) scale(1 1.0)" font-size="6.10" fill="#333" stroke="#333" stroke-width="0.12">12,2</text></svg>
<svg class="t" width="1" height="1"><text transform="translate(101.54 155.90) scale(1 1.0)" font-size="6.10" fill="#333" stroke="#333" stroke-width="0.12">6,7</text></svg>
<svg class="t" width="1" height="1"><text transform="translate(99.84 166.30) scale(1 1.0)" font-size="6.10" fill="#333" stroke="#333" stroke-width="0.12">17,8</text></svg>
<svg class="t" width="1" height="1"><text transform="translate(99.84 176.30) scale(1 1.0)" font-size="6.10" fill="#333" stroke="#333" stroke-width="0.12">45,0</text></svg>
<svg class="t" width="1" height="1"><text transform="translate(136.30 133.75) scale(1 1.0)" font-size="6.50" fill="#3a3a3a" stroke="#3a3a3a" stroke-width="0.12">Mayo</text></svg>
<svg class="t" width="1" height="1"><text transform="translate(138.31 144.75) scale(1 1.0)" font-size="6.10" fill="#333" stroke="#333" stroke-width="0.12">15,8</text></svg>
<svg class="t" width="1" height="1"><text transform="translate(138.31 155.90) scale(1 1.0)" font-size="6.10" fill="#333" stroke="#333" stroke-width="0.12">10,0</text></svg>
<svg class="t" width="1" height="1"><text transform="translate(138.31 166.30) scale(1 1.0)" font-size="6.10" fill="#333" stroke="#333" stroke-width="0.12">21,6</text></svg>
<svg class="t" width="1" height="1"><text transform="translate(138.31 176.30) scale(1 1.0)" font-size="6.10" fill="#333" stroke="#333" stroke-width="0.12">44,0</text></svg>
<svg class="t" width="1" height="1"><text transform="translate(174.95 133.75) scale(1 1.0)" font-size="6.50" fill="#3a3a3a" stroke="#3a3a3a" stroke-width="0.12">Junio</text></svg>
<svg class="t" width="1" height="1"><text transform="translate(176.78 144.75) scale(1 1.0)" font-size="6.10" fill="#333" stroke="#333" stroke-width="0.12">20,4</text></svg>
<svg class="t" width="1" height="1"><text transform="translate(176.78 155.90) scale(1 1.0)" font-size="6.10" fill="#333" stroke="#333" stroke-width="0.12">14,1</text></svg>
<svg class="t" width="1" height="1"><text transform="translate(176.78 166.30) scale(1 1.0)" font-size="6.10" fill="#333" stroke="#333" stroke-width="0.12">26,8</text></svg>
<svg class="t" width="1" height="1"><text transform="translate(176.78 176.30) scale(1 1.0)" font-size="6.10" fill="#333" stroke="#333" stroke-width="0.12">28,0</text></svg>
<svg class="t" width="1" height="1"><text transform="translate(214.50 133.75) scale(1 1.0)" font-size="6.50" fill="#3a3a3a" stroke="#3a3a3a" stroke-width="0.12">Julio</text></svg>
<svg class="t" width="1" height="1"><text transform="translate(215.25 144.75) scale(1 1.0)" font-size="6.10" fill="#333" stroke="#333" stroke-width="0.12">24,0</text></svg>
<svg class="t" width="1" height="1"><text transform="translate(215.25 155.90) scale(1 1.0)" font-size="6.10" fill="#333" stroke="#333" stroke-width="0.12">17,3</text></svg>
<svg class="t" width="1" height="1"><text transform="translate(215.25 166.30) scale(1 1.0)" font-size="6.10" fill="#333" stroke="#333" stroke-width="0.12">30,8</text></svg>
<svg class="t" width="1" height="1"><text transform="translate(215.48 176.30) scale(1 1.0)" font-size="6.10" fill="#333" stroke="#333" stroke-width="0.12">11,0</text></svg>
<svg class="t" width="1" height="1"><text transform="translate(249.54 133.75) scale(1 1.0)" font-size="6.50" fill="#3a3a3a" stroke="#3a3a3a" stroke-width="0.12">Agosto</text></svg>
<svg class="t" width="1" height="1"><text transform="translate(253.72 144.75) scale(1 1.0)" font-size="6.10" fill="#333" stroke="#333" stroke-width="0.12">23,2</text></svg>
<svg class="t" width="1" height="1"><text transform="translate(253.72 155.90) scale(1 1.0)" font-size="6.10" fill="#333" stroke="#333" stroke-width="0.12">17,0</text></svg>
<svg class="t" width="1" height="1"><text transform="translate(253.72 166.30) scale(1 1.0)" font-size="6.10" fill="#333" stroke="#333" stroke-width="0.12">29,5</text></svg>
<svg class="t" width="1" height="1"><text transform="translate(253.95 176.30) scale(1 1.0)" font-size="6.10" fill="#333" stroke="#333" stroke-width="0.12">11,0</text></svg>
<svg class="t" width="1" height="1"><text transform="translate(281.51 133.75) scale(1 1.0)" font-size="6.50" fill="#3a3a3a" stroke="#3a3a3a" stroke-width="0.12">Septiembre</text></svg>
<svg class="t" width="1" height="1"><text transform="translate(292.19 144.75) scale(1 1.0)" font-size="6.10" fill="#333" stroke="#333" stroke-width="0.12">19,6</text></svg>
<svg class="t" width="1" height="1"><text transform="translate(292.19 155.90) scale(1 1.0)" font-size="6.10" fill="#333" stroke="#333" stroke-width="0.12">14,1</text></svg>
<svg class="t" width="1" height="1"><text transform="translate(292.19 166.30) scale(1 1.0)" font-size="6.10" fill="#333" stroke="#333" stroke-width="0.12">25,2</text></svg>
<svg class="t" width="1" height="1"><text transform="translate(292.19 176.30) scale(1 1.0)" font-size="6.10" fill="#333" stroke="#333" stroke-width="0.12">30,0</text></svg>
<svg class="t" width="1" height="1"><text transform="translate(325.04 133.75) scale(1 1.0)" font-size="6.50" fill="#3a3a3a" stroke="#3a3a3a" stroke-width="0.12">Octubre</text></svg>
<svg class="t" width="1" height="1"><text transform="translate(330.66 144.75) scale(1 1.0)" font-size="6.10" fill="#333" stroke="#333" stroke-width="0.12">14,0</text></svg>
<svg class="t" width="1" height="1"><text transform="translate(332.36 155.90) scale(1 1.0)" font-size="6.10" fill="#333" stroke="#333" stroke-width="0.12">9,4</text></svg>
<svg class="t" width="1" height="1"><text transform="translate(330.66 166.30) scale(1 1.0)" font-size="6.10" fill="#333" stroke="#333" stroke-width="0.12">18,7</text></svg>
<svg class="t" width="1" height="1"><text transform="translate(330.66 176.30) scale(1 1.0)" font-size="6.10" fill="#333" stroke="#333" stroke-width="0.12">51,0</text></svg>
<svg class="t" width="1" height="1"><text transform="translate(359.35 133.75) scale(1 1.0)" font-size="6.50" fill="#3a3a3a" stroke="#3a3a3a" stroke-width="0.12">Noviembre</text></svg>
<svg class="t" width="1" height="1"><text transform="translate(370.83 144.75) scale(1 1.0)" font-size="6.10" fill="#333" stroke="#333" stroke-width="0.12">8,9</text></svg>
<svg class="t" width="1" height="1"><text transform="translate(370.83 155.90) scale(1 1.0)" font-size="6.10" fill="#333" stroke="#333" stroke-width="0.12">4,9</text></svg>
<svg class="t" width="1" height="1"><text transform="translate(369.13 166.30) scale(1 1.0)" font-size="6.10" fill="#333" stroke="#333" stroke-width="0.12">12,9</text></svg>
<svg class="t" width="1" height="1"><text transform="translate(369.13 176.30) scale(1 1.0)" font-size="6.10" fill="#333" stroke="#333" stroke-width="0.12">58,0</text></svg>
<svg class="t" width="1" height="1"><text transform="translate(398.91 133.75) scale(1 1.0)" font-size="6.50" fill="#3a3a3a" stroke="#3a3a3a" stroke-width="0.12">Diciembre</text></svg>
<svg class="t" width="1" height="1"><text transform="translate(409.30 144.75) scale(1 1.0)" font-size="6.10" fill="#333" stroke="#333" stroke-width="0.12">5,4</text></svg>
<svg class="t" width="1" height="1"><text transform="translate(409.30 155.90) scale(1 1.0)" font-size="6.10" fill="#333" stroke="#333" stroke-width="0.12">2,0</text></svg>
<svg class="t" width="1" height="1"><text transform="translate(409.30 166.30) scale(1 1.0)" font-size="6.10" fill="#333" stroke="#333" stroke-width="0.12">8,9</text></svg>
<svg class="t" width="1" height="1"><text transform="translate(407.60 176.30) scale(1 1.0)" font-size="6.10" fill="#333" stroke="#333" stroke-width="0.12">50,0</text></svg>
<svg style="left:0;top:0" width="652" height="200" viewBox="0 0 652 200"><rect x="0" y="135.60" width="432.77" height="0.900" fill="#555"/><rect x="0" y="146.50" width="432.77" height="0.900" fill="#555"/><rect x="0" y="157.20" width="432.77" height="0.900" fill="#555"/><rect x="0" y="167.70" width="432.77" height="0.900" fill="#555"/><rect x="0" y="177.90" width="432.77" height="0.900" fill="#555"/><rect x="9.10" y="136.1" width="0.900" height="42.100" fill="#555"/><rect x="47.57" y="136.1" width="0.900" height="42.100" fill="#555"/><rect x="86.04" y="136.1" width="0.900" height="42.100" fill="#555"/><rect x="124.51" y="136.1" width="0.900" height="42.100" fill="#555"/><rect x="162.98" y="136.1" width="0.900" height="42.100" fill="#555"/><rect x="201.45" y="136.1" width="0.900" height="42.100" fill="#555"/><rect x="239.92" y="136.1" width="0.900" height="42.100" fill="#555"/><rect x="278.39" y="136.1" width="0.900" height="42.100" fill="#555"/><rect x="316.86" y="136.1" width="0.900" height="42.100" fill="#555"/><rect x="355.33" y="136.1" width="0.900" height="42.100" fill="#555"/><rect x="393.80" y="136.1" width="0.900" height="42.100" fill="#555"/><rect x="432.27" y="136.1" width="0.900" height="42.100" fill="#555"/><rect x="0" y="146.300" width="432.77" height="1.500" fill="#3f86d0"/><rect x="0" y="136" width="432.77" height="0.900" fill="#9a8fc0"/><rect x="432.07" y="136.400" width="1.400" height="10.600" fill="#3f86d0"/><rect x="432.27" y="126" width="1" height="10.400" fill="#a99ac8"/></svg>
<div style="left:224.00px;top:231.50px;width:230.00px;height:138.00px;background:#fff;box-shadow:0 0 0 0.6px #b9b9b9;"></div>
<svg style="left:0;top:0;font-family:'Liberation Sans',sans-serif" width="480" height="380" viewBox="0 0 480 380"><rect x="238.500" y="337.10" width="208" height="0.600" fill="#e4e4e4"/><rect x="238.500" y="322.90" width="208" height="0.600" fill="#e4e4e4"/><rect x="238.500" y="308.70" width="208" height="0.600" fill="#e4e4e4"/><rect x="238.500" y="294.50" width="208" height="0.600" fill="#e4e4e4"/><rect x="238.500" y="280.30" width="208" height="0.600" fill="#e4e4e4"/><rect x="238.500" y="266.10" width="208" height="0.600" fill="#e4e4e4"/><rect x="238.500" y="251.90" width="208" height="0.600" fill="#e4e4e4"/><rect x="238.500" y="237.70" width="208" height="0.600" fill="#e4e4e4"/> <rect x="244.20" y="276.34" width="6.600" height="61.06" fill="#f5801f"/> <rect x="261.50" y="274.92" width="6.600" height="62.48" fill="#f5801f"/> <rect x="278.80" y="287.70" width="6.600" height="49.70" fill="#f5801f"/> <rect x="296.10" y="273.50" width="6.600" height="63.90" fill="#f5801f"/> <rect x="313.40" y="274.92" width="6.600" height="62.48" fill="#f5801f"/> <rect x="330.70" y="297.64" width="6.600" height="39.76" fill="#f5801f"/> <rect x="348.00" y="321.78" width="6.600" height="15.62" fill="#f5801f"/> <rect x="365.30" y="321.78" width="6.600" height="15.62" fill="#f5801f"/> <rect x="382.60" y="294.80" width="6.600" height="42.60" fill="#f5801f"/> <rect x="399.90" y="264.98" width="6.600" height="72.42" fill="#f5801f"/> <rect x="417.20" y="255.04" width="6.600" height="82.36" fill="#f5801f"/> <rect x="434.50" y="266.40" width="6.600" height="71.00" fill="#f5801f"/><polyline points="247.50,330.58 264.80,328.31 282.10,323.77 299.40,320.08 316.70,314.96 334.00,308.43 351.30,303.32 368.60,304.46 385.90,309.57 403.20,317.52 420.50,324.76 437.80,329.73" fill="none" stroke="#2278c4" stroke-width="1.400"/><rect x="245.30" y="328.38" width="4.400" height="4.400" rx="0.800" fill="#5b9fc0" fill-opacity="0.750" stroke="#2b86c2" stroke-width="1.100"/><rect x="262.60" y="326.11" width="4.400" height="4.400" rx="0.800" fill="#5b9fc0" fill-opacity="0.750" stroke="#2b86c2" stroke-width="1.100"/><rect x="279.90" y="321.57" width="4.400" height="4.400" rx="0.800" fill="#5b9fc0" fill-opacity="0.750" stroke="#2b86c2" stroke-width="1.100"/><rect x="297.20" y="317.88" width="4.400" height="4.400" rx="0.800" fill="#5b9fc0" fill-opacity="0.750" stroke="#2b86c2" stroke-width="1.100"/><rect x="314.50" y="312.76" width="4.400" height="4.400" rx="0.800" fill="#5b9fc0" fill-opacity="0.750" stroke="#2b86c2" stroke-width="1.100"/><rect x="331.80" y="306.23" width="4.400" height="4.400" rx="0.800" fill="#5b9fc0" fill-opacity="0.750" stroke="#2b86c2" stroke-width="1.100"/><rect x="349.10" y="301.12" width="4.400" height="4.400" rx="0.800" fill="#5b9fc0" fill-opacity="0.750" stroke="#2b86c2" stroke-width="1.100"/><rect x="366.40" y="302.26" width="4.400" height="4.400" rx="0.800" fill="#5b9fc0" fill-opacity="0.750" stroke="#2b86c2" stroke-width="1.100"/><rect x="383.70" y="307.37" width="4.400" height="4.400" rx="0.800" fill="#5b9fc0" fill-opacity="0.750" stroke="#2b86c2" stroke-width="1.100"/><rect x="401.00" y="315.32" width="4.400" height="4.400" rx="0.800" fill="#5b9fc0" fill-opacity="0.750" stroke="#2b86c2" stroke-width="1.100"/><rect x="418.30" y="322.56" width="4.400" height="4.400" rx="0.800" fill="#5b9fc0" fill-opacity="0.750" stroke="#2b86c2" stroke-width="1.100"/><rect x="435.60" y="327.53" width="4.400" height="4.400" rx="0.800" fill="#5b9fc0" fill-opacity="0.750" stroke="#2b86c2" stroke-width="1.100"/><text x="247.30" y="342.700" font-size="5.700" fill="#6a6a6a" text-anchor="end" transform="rotate(-45 247.30 342.700)" dominant-baseline="hanging">Enero</text><text x="264.60" y="342.700" font-size="5.700" fill="#6a6a6a" text-anchor="end" transform="rotate(-45 264.60 342.700)" dominant-baseline="hanging">Febrero</text><text x="281.90" y="342.700" font-size="5.700" fill="#6a6a6a" text-anchor="end" transform="rotate(-45 281.90 342.700)" dominant-baseline="hanging">Marzo</text><text x="299.20" y="342.700" font-size="5.700" fill="#6a6a6a" text-anchor="end" transform="rotate(-45 299.20 342.700)" dominant-baseline="hanging">Abril</text><text x="316.50" y="342.700" font-size="5.700" fill="#6a6a6a" text-anchor="end" transform="rotate(-45 316.50 342.700)" dominant-baseline="hanging">Mayo</text><text x="333.80" y="342.700" font-size="5.700" fill="#6a6a6a" text-anchor="end" transform="rotate(-45 333.80 342.700)" dominant-baseline="hanging">Junio</text><text x="351.10" y="342.700" font-size="5.700" fill="#6a6a6a" text-anchor="end" transform="rotate(-45 351.10 342.700)" dominant-baseline="hanging">Julio</text><text x="368.40" y="342.700" font-size="5.700" fill="#6a6a6a" text-anchor="end" transform="rotate(-45 368.40 342.700)" dominant-baseline="hanging">Agosto</text><text x="385.70" y="342.700" font-size="5.700" fill="#6a6a6a" text-anchor="end" transform="rotate(-45 385.70 342.700)" dominant-baseline="hanging">Septiembre</text><text x="403.00" y="342.700" font-size="5.700" fill="#6a6a6a" text-anchor="end" transform="rotate(-45 403.00 342.700)" dominant-baseline="hanging">Octubre</text><text x="420.30" y="342.700" font-size="5.700" fill="#6a6a6a" text-anchor="end" transform="rotate(-45 420.30 342.700)" dominant-baseline="hanging">Noviembre</text><text x="437.60" y="342.700" font-size="5.700" fill="#6a6a6a" text-anchor="end" transform="rotate(-45 437.60 342.700)" dominant-baseline="hanging">Diciembre</text><text x="231" y="339.30" font-size="5.700" fill="#707070" text-anchor="middle">00</text><text x="231" y="325.10" font-size="5.700" fill="#707070" text-anchor="middle">10</text><text x="231" y="310.90" font-size="5.700" fill="#707070" text-anchor="middle">20</text><text x="231" y="296.70" font-size="5.700" fill="#707070" text-anchor="middle">30</text><text x="231" y="282.50" font-size="5.700" fill="#707070" text-anchor="middle">40</text><text x="231" y="268.30" font-size="5.700" fill="#707070" text-anchor="middle">50</text><text x="231" y="254.10" font-size="5.700" fill="#707070" text-anchor="middle">60</text><text x="231" y="239.90" font-size="5.700" fill="#707070" text-anchor="middle">70</text><circle cx="224" cy="231.5" r="2.300" fill="#fff" stroke="#7a7a7a" stroke-width="0.700"/><circle cx="339" cy="231.5" r="2.300" fill="#fff" stroke="#7a7a7a" stroke-width="0.700"/><circle cx="454" cy="231.5" r="2.300" fill="#fff" stroke="#7a7a7a" stroke-width="0.700"/><circle cx="224" cy="300.5" r="2.300" fill="#fff" stroke="#7a7a7a" stroke-width="0.700"/><circle cx="454" cy="300.5" r="2.300" fill="#fff" stroke="#7a7a7a" stroke-width="0.700"/><circle cx="224" cy="369.5" r="2.300" fill="#fff" stroke="#7a7a7a" stroke-width="0.700"/><circle cx="339" cy="369.5" r="2.300" fill="#fff" stroke="#7a7a7a" stroke-width="0.700"/><circle cx="454" cy="369.5" r="2.300" fill="#fff" stroke="#7a7a7a" stroke-width="0.700"/></svg>
<div style="left:460.80px;top:231.80px;width:12.40px;height:12.20px;background:#fdfdfd;box-shadow:0 0 0 0.6px #c4c4c4;"></div>
<div style="left:460.80px;top:249.80px;width:12.40px;height:12.20px;background:#fdfdfd;box-shadow:0 0 0 0.6px #c4c4c4;"></div>
<div style="left:460.80px;top:267.80px;width:12.40px;height:12.20px;background:#fdfdfd;box-shadow:0 0 0 0.6px #c4c4c4;"></div>
<svg style="left:460px;top:231px" width="14" height="50" viewBox="0 0 14 50"><path d="M3.600 6.800h6.800M7 3.400v6.800" stroke="#23a070" stroke-width="1.700"/><path d="M10.900 20.300l-4.600 4.600l1.400 1.300l3.600 -5.300z" fill="#555"/><path d="M6 25.200c-1.300 0.300 -1.400 1.700 -2.600 2.300c1.700 0.600 3.700 -0.100 4 -1.300z" fill="#2a80c8"/><path d="M3.600 38.800h6.800l-2.700 3.200v3.800l-1.400-0.900v-2.900z" fill="#fff" stroke="#6a6a6a" stroke-width="0.800"/><path d="M4.600 40h4.800" stroke="#6a6a6a" stroke-width="0.600"/></svg>
<div style="left:348.60px;top:266.60px;width:102.00px;height:30.00px;background:#f9f9f9;box-shadow:0 0 0 0.6px #c9c9c9, 0 1px 3px rgba(0,0,0,0.15);"></div>
<svg style="left:352px;top:268px" width="50" height="16" viewBox="0 0 50 16"><path d="M5.500 6.200l4-3.600l4.200 4.200l-4.600 3.600z" fill="#fff" stroke="#666" stroke-width="0.700"/><path d="M9 1.200c-1.500 0.500-1.800 2-1.400 3.400" fill="none" stroke="#666" stroke-width="0.600"/><path d="M14 7.500c0.800 1.300 1 2 0.300 2.500c-0.800 0.300-1.300-0.800-0.300-2.500z" fill="#888"/><rect x="4.500" y="11.300" width="11" height="2.700" fill="#f5801f"/><path d="M17 7l1.600 0l-0.800 1z" fill="#555"/><rect x="30.500" y="2.500" width="9" height="7.500" fill="#fff" stroke="#777" stroke-width="0.600"/><path d="M41.500 2.800l-5.500 6l-1.600 0.500l0.500-1.600z" fill="#2a78c0"/><rect x="29.800" y="11.300" width="11.500" height="2.700" fill="#1f6fb5"/><path d="M42.500 7l1.600 0l-0.800 1z" fill="#555"/></svg>
<svg class="t" width="1" height="1"><text transform="translate(352.90 289.65) scale(1 1.14)" font-size="5.31" fill="#777" stroke="#777" stroke-width="0.12">Relleno</text></svg>
<svg class="t" width="1" height="1"><text transform="translate(376.15 289.65) scale(1 1.14)" font-size="5.70" fill="#777" stroke="#777" stroke-width="0.12">Contorno</text></svg>
<div style="left:402.50px;top:275.50px;width:44.50px;height:11.00px;background:#fff;box-shadow:0 0 0 0.6px #d0d0d0;"></div>
<svg class="t" width="1" height="1"><text transform="translate(404.15 282.65) scale(1 1.14)" font-size="5.36" fill="#555" stroke="#555" stroke-width="0.12">Serie "Tempera</text></svg>
<svg style="left:442.500px;top:279.500px" width="4" height="3" viewBox="0 0 4 3"><path d="M0.500 0.500h3l-1.500 1.800z" fill="#555"/></svg>
<div style="left:348.85px;top:304.40px;width:127.75px;height:95.50px;background:#f7f7f7;box-shadow:0 0 0 0.6px #c6c6c6, 1px 1px 3px rgba(0,0,0,0.2);"></div>
<div style="left:349.40px;top:388.20px;width:126.80px;height:10.90px;background:#c8c8c8;"></div>
<svg class="t" width="1" height="1"><text transform="translate(365.10 312.60) scale(1 1.14)" font-size="5.68" fill="#5a5a5a" stroke="#5a5a5a" stroke-width="0.12">Eliminar</text></svg>
<svg class="t" width="1" height="1"><text transform="translate(365.10 324.15) scale(1 1.14)" font-size="5.61" fill="#5a5a5a" stroke="#5a5a5a" stroke-width="0.12">Restablecer para hacer coincidir el estilo</text></svg>
<svg class="t" width="1" height="1"><text transform="translate(365.10 336.75) scale(1 1.14)" font-size="5.61" fill="#5a5a5a" stroke="#5a5a5a" stroke-width="0.12">Cambiar tipo de gráfico de series...</text></svg>
<svg class="t" width="1" height="1"><text transform="translate(365.10 348.10) scale(1 1.14)" font-size="5.39" fill="#5a5a5a" stroke="#5a5a5a" stroke-width="0.12">Seleccionar datos...</text></svg>
<svg class="t" width="1" height="1"><text transform="translate(365.50 359.60) scale(1 1.14)" font-size="5.03" fill="#b8b8b8" stroke="#b8b8b8" stroke-width="0.12">Giro 3D...</text></svg>
<svg class="t" width="1" height="1"><text transform="translate(365.10 372.20) scale(1 1.14)" font-size="5.61" fill="#5a5a5a" stroke="#5a5a5a" stroke-width="0.12">Agregar etiquetas de datos</text></svg>
<svg class="t" width="1" height="1"><text transform="translate(365.10 383.60) scale(1 1.14)" font-size="5.63" fill="#5a5a5a" stroke="#5a5a5a" stroke-width="0.12">Agregar línea de tendencia...</text></svg>
<svg class="t" width="1" height="1"><text transform="translate(365.10 394.60) scale(1 1.14)" font-size="5.58" fill="#333" stroke="#333" stroke-width="0.12">Dar formato a serie de datos...</text></svg>
<svg style="left:469.500px;top:368px" width="4" height="5" viewBox="0 0 4 5"><path d="M0.800 0.500l2.200 2l-2.200 2z" fill="#444"/></svg>
<svg style="left:350px;top:316px" width="12" height="84" viewBox="0 0 12 84"><rect x="3.500" y="3.500" width="5.500" height="5.500" fill="#fff" stroke="#777" stroke-width="0.600"/><path d="M2 4.500c0.500-2 2.500-2.600 4.500-1.800" fill="none" stroke="#2a78c0" stroke-width="0.900"/><path d="M6 1.200l1.800 1.600l-2.200 0.800z" fill="#2a78c0"/><rect x="2.500" y="17" width="1.800" height="4.500" fill="#2a77b8"/><rect x="4.900" y="14.800" width="1.800" height="6.700" fill="#e8b860"/><rect x="7.300" y="16.200" width="1.800" height="5.300" fill="#666"/><rect x="2.300" y="26.500" width="6.500" height="6" fill="#fff" stroke="#777" stroke-width="0.600"/><rect x="2.300" y="26.500" width="6.500" height="1.500" fill="#777"/><rect x="6" y="30.300" width="3.600" height="3.400" fill="#eee" stroke="#666" stroke-width="0.500"/><rect x="3" y="38.800" width="5.500" height="5.800" rx="0.800" fill="#fdfdfd" stroke="#aaa" stroke-width="0.600"/><path d="M7.600 72l1.300 0.600l-2.300 4.700l-1.500-0.700z" fill="#6a6a6a"/><path d="M4.300 76.300l2.900 1.300c0 1.700-1.300 2.900-3.600 2.700c0.900-1.100 0.300-2.500 0.700-4z" fill="#2a78c0"/><path d="M9.800 73.200v5.200" stroke="#9a9a9a" stroke-width="0.800"/></svg>
<div style="left:652.00px;top:126.00px;width:10.50px;height:363.00px;background:#efefef;"></div>
<div style="left:654.40px;top:126.00px;width:6.00px;height:332.00px;background:#fff;box-shadow:0 0 0 0.5px #cfcfcf;"></div>
<div style="left:654.40px;top:458.00px;width:6.00px;height:11.00px;background:#d9d9d9;"></div>
<div style="left:654.40px;top:469.00px;width:6.00px;height:7.00px;background:#fff;box-shadow:0 0 0 0.5px #cfcfcf;"></div>
<div style="left:654.40px;top:117.80px;width:6.00px;height:7.00px;background:#fff;box-shadow:0 0 0 0.5px #cfcfcf;"></div>
<svg style="left:654px;top:113px" width="7" height="364" viewBox="0 0 7 364"><path d="M2 9.100l1.400-1.600l1.400 1.600z" fill="#555"/><path d="M2 358.700l1.400 1.600l1.400-1.600z" fill="#555"/></svg>
<div style="left:662.00px;top:110.50px;width:138.00px;height:378.50px;background:#e6e6e6;"></div>
<svg class="t" width="1" height="1"><text transform="translate(669.60 133.40) scale(1 1.14)" font-size="9.74" fill="#1f8a5f">Formato de serie d...</text></svg>
<svg style="left:765px;top:124px" width="30" height="10" viewBox="0 0 30 10"><path d="M1.500 3.500h3.400l-1.700 2z" fill="#555"/><path d="M21.200 2.800l4 4M25.200 2.800l-4 4" stroke="#444" stroke-width="0.900"/></svg>
<svg class="t" width="1" height="1"><text transform="translate(671.90 146.50) scale(1 1.14)" font-size="5.43" fill="#333" font-weight="bold">Opciones de serie</text></svg>
<svg style="left:719.500px;top:142.500px" width="6" height="4" viewBox="0 0 6 4"><path d="M0.500 0.500h4.400l-2.200 2.600z" fill="#666"/></svg>
<div style="left:668.00px;top:174.30px;width:127.00px;height:0.70px;background:#dadada;"></div>
<svg style="left:670px;top:153px" width="54" height="15" viewBox="0 0 54 15"><path d="M3 7.200l4.200-4l5 5l-4.600 4z" fill="#fff" stroke="#555" stroke-width="0.800"/><path d="M6.800 1.200c-1.600 0.800-1.600 2.600-1 4" fill="none" stroke="#555" stroke-width="0.700"/><path d="M12.600 8.500c0.900 1.400 1.100 2.400 0.300 2.900c-0.900 0.300-1.400-1-0.300-2.900z" fill="#777"/><path d="M27 2.300l4.800 3.500l-1.800 5.700h-6l-1.800-5.700z" fill="#fdfdfd" stroke="#8a8a8a" stroke-width="0.700"/><path d="M24.300 12.600h5.400" stroke="#aaa" stroke-width="0.600"/><rect x="40.200" y="1" width="11.900" height="13" fill="#d8efe3" opacity="0.600"/><rect x="41.200" y="6" width="2.900" height="7" fill="#0f7a4b"/><rect x="44.700" y="2.500" width="2.900" height="10.500" fill="#0f7a4b"/><rect x="48.200" y="4.300" width="2.900" height="8.700" fill="#0f7a4b"/><path d="M43.500 21.600l2.500-2.400l2.500 2.400" fill="#e6e6e6" stroke="#d4d4d4" stroke-width="0.600"/></svg>
<svg style="left:672.500px;top:179.500px" width="5" height="5" viewBox="0 0 5 5"><path d="M4 0.800v3.200h-3.200z" fill="#444"/></svg>
<svg class="t" width="1" height="1"><text transform="translate(680.00 184.50) scale(1 1.14)" font-size="5.44" fill="#0c8455" font-weight="bold">Opciones de serie</text></svg>
<svg class="t" width="1" height="1"><text transform="translate(680.25 194.90) scale(1 1.14)" font-size="5.16" fill="#555" stroke="#555" stroke-width="0.12">Trazar serie en</text></svg>
<svg style="left:684.600px;top:204px" width="6" height="6" viewBox="0 0 6 6"><circle cx="3" cy="3" r="2.300" fill="#fff" stroke="#b5b5b5" stroke-width="0.600"/></svg>
<svg style="left:684.600px;top:214.4px" width="6" height="6" viewBox="0 0 6 6"><circle cx="3" cy="3" r="2.300" fill="#fff" stroke="#b5b5b5" stroke-width="0.600"/><circle cx="3" cy="3" r="1.300" fill="#333"/></svg>
<svg class="t" width="1" height="1"><text transform="translate(693.50 209.10) scale(1 1.14)" font-size="5.60" fill="#555" stroke="#555" stroke-width="0.12"><tspan text-decoration="underline">E</tspan>je principal</text></svg>
<svg class="t" width="1" height="1"><text transform="translate(693.50 219.50) scale(1 1.14)" font-size="5.43" fill="#555" stroke="#555" stroke-width="0.12"><tspan text-decoration="underline">E</tspan>je secundario</text></svg>
<div style="left:0.00px;top:476.00px;width:662.00px;height:13.00px;background:#e8e8e8;"></div>
<div style="left:0.00px;top:475.60px;width:652.00px;height:0.80px;background:#cfcfcf;"></div>
<div style="left:356.40px;top:479.60px;width:6.60px;height:6.60px;background:#fff;box-shadow:0 0 0 0.5px #c9c9c9;"></div>
<div style="left:363.50px;top:479.60px;width:265.50px;height:6.60px;background:#fff;box-shadow:0 0 0 0.5px #c9c9c9;"></div>
<div style="left:645.50px;top:479.60px;width:6.60px;height:6.60px;background:#fff;box-shadow:0 0 0 0.5px #c9c9c9;"></div>
<svg style="left:346px;top:478px" width="310" height="10" viewBox="0 0 310 10"><circle cx="3" cy="2.500" r="0.450" fill="#888"/><circle cx="3" cy="4.900" r="0.450" fill="#888"/><circle cx="3" cy="7.300" r="0.450" fill="#888"/><path d="M15.100 3v3.800l-2.600-1.900z" fill="#333"/><path d="M301.700 3v3.800l2.600-1.900z" fill="#333"/></svg>
<div style="left:0.00px;top:489.00px;width:800.00px;height:9.00px;background:#f3f1ef;"></div>
<div style="left:0.00px;top:498.00px;width:800.00px;height:2.00px;background:#c9c4c0;"></div>
<div style="left:662.40px;top:489.00px;width:17.20px;height:9.00px;background:#c9c9c9;"></div>
<svg style="left:662px;top:489px" width="138" height="9" viewBox="0 0 138 9"><rect x="5.500" y="1.500" width="6.500" height="6" fill="#8a8a8a"/><path d="M5.500 3.500h6.500M5.500 5.500h6.500M8.700 1.500v6" stroke="#c9c9c9" stroke-width="0.500"/><rect x="24.500" y="1.500" width="6.500" height="6" fill="#ddd" stroke="#888" stroke-width="0.600"/><rect x="26.300" y="2.800" width="3" height="3.500" fill="#aaa"/><rect x="42.500" y="1.500" width="6.500" height="6" fill="#f8f8f8" stroke="#777" stroke-width="0.600"/><path d="M45 1.500v3h2.300v-3" fill="none" stroke="#777" stroke-width="0.500"/><path d="M57.500 4.700h2.600" stroke="#555" stroke-width="0.700"/><path d="M62 4.700h48" stroke="#999" stroke-width="0.500"/><rect x="85.300" y="2" width="1.500" height="5.500" fill="#555"/><path d="M112 4.700h3M113.500 3.200v3" stroke="#555" stroke-width="0.700"/></svg>
<svg class="t" width="1" height="1"><text transform="translate(783.00 495.36) scale(1 1.14)" font-size="4.69" fill="#444" stroke="#444" stroke-width="0.12">100%</text></svg>
<svg style="left:0;top:0" width="800" height="500" viewBox="0 0 800 500" fill="none"><path d="M272.0 327.6L335.5 379.7" stroke="#ea1212" stroke-width="2.0"/><path d="M347.5 389.5L333.0 382.8L338.0 376.6Z" fill="#fff" stroke="#ea1212" stroke-width="1.500" stroke-linejoin="miter"/><path d="M477.5 395.0L667.5 233.8" stroke="#ea1212" stroke-width="2.0"/><path d="M680.5 222.8L670.3 237.0L664.8 230.6Z" fill="#fff" stroke="#ea1212" stroke-width="1.500" stroke-linejoin="miter"/></svg>
</div></body></html>
